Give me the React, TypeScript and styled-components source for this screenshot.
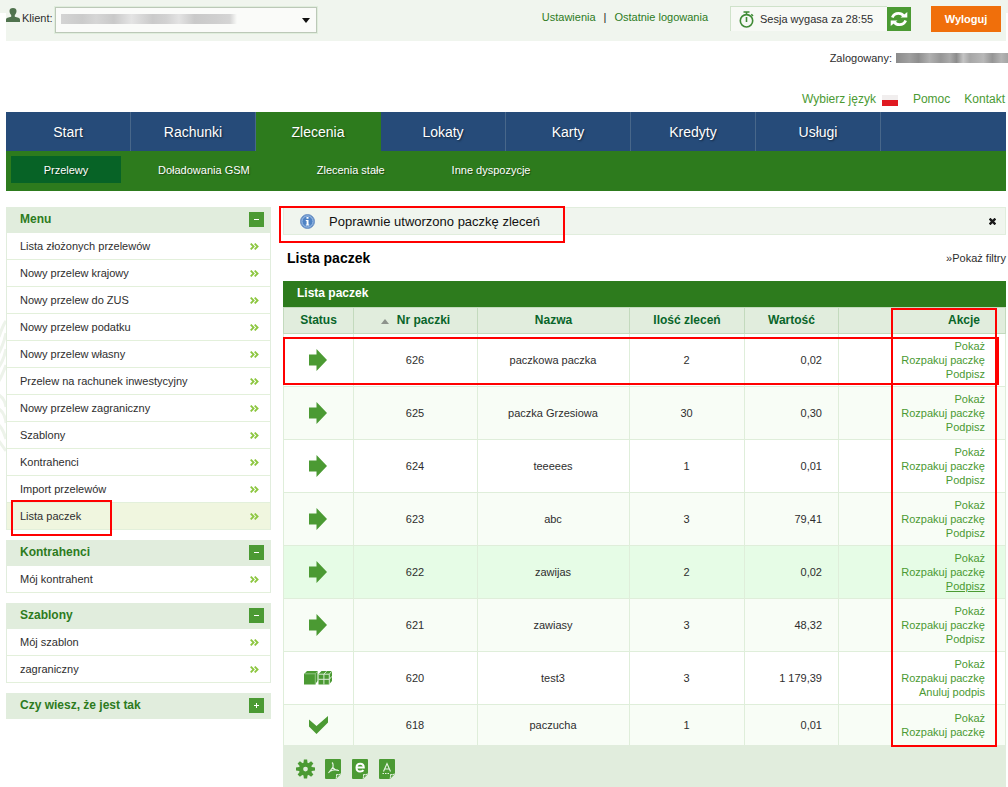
import React from "react";
import styled, { createGlobalStyle, css } from "styled-components";

const Global = createGlobalStyle`
  * { box-sizing: border-box; }
  body {
    margin: 0;
    background: #fff linear-gradient(#f0f5ee, #f0f5ee) 0 0 / 100% 13px no-repeat;
    font: 11px/14px "Liberation Sans", Arial, sans-serif;
    color: #2e2e2e;
  }
  a { color: inherit; text-decoration: none; }
  a:hover { text-decoration: underline; }
  button { font: inherit; border: 0; padding: 0; cursor: pointer; }
  ul { list-style: none; margin: 0; padding: 0; }
  h1, h2 { margin: 0; }
`;

const green = "#2d7b1d";
const leaf = "#4b9a33";
const pale = "#e1eddd";
const line = "#dfeeda";

const Page = styled.div`
  position: relative;
  padding: 0 2px 0 6px;
`;

const Leaves = styled.svg`
  position: absolute;
  left: 0;
  top: 315px;
`;

const TopBar = styled.header`
  display: flex;
  justify-content: space-between;
  align-items: flex-start;
  height: 41px;
  padding: 6px 5px 0 0;
  background: #f0f5ee;
`;

const Client = styled.div`
  display: flex;
  align-items: flex-start;
  label { padding: 5px 2px 0; }
`;

const PersonBox = styled.span`
  padding-top: 2px;
  line-height: 0;
`;

const SelectWrap = styled.div`
  position: relative;
  width: 262px;
  height: 26px;
  margin-top: 1px;
  svg { position: absolute; right: 7px; top: 11px; pointer-events: none; }
`;

const ClientSelect = styled.select`
  width: 100%;
  height: 100%;
  appearance: none;
  border: 1px solid #bcc8b8;
  border-radius: 0;
  background: #fafbf9;
  font: inherit;
  outline: 1px solid #e0eedd;
  outline-offset: 0;
`;

const Mask = styled.span<{ $dark?: boolean }>`
  display: block;
  height: 10px;
  ${(p) =>
    p.$dark
      ? css`
          width: 112px;
          background: linear-gradient(90deg, #8b8b8b, #a0a0a0 12%, #8e8e8e 20%, #b0b0b0 30%, #969696 40%, #aaa 48%, #8c8c8c 54%, #c4c4c4 60%, #a6a6a6 66%, #b8b8b8 78%, #959595 86%, #b4b4b4 94%, #a4a4a4);
        `
      : css`
          position: absolute;
          left: 6px;
          top: 7px;
          width: 176px;
          pointer-events: none;
          background: linear-gradient(90deg, #d4d4d4, #cbcbcb 12%, #d6d6d6 20%, #c9c9c9 30%, #e4e4e4 40%, #cacaca 52%, #d2d2d2 60%, #e3e3e3 67%, #c9c9c9 76%, #cfcfcf 88%, #d5d5d5 96%, #fafbf9);
        `}
`;

const Tools = styled.div`
  display: flex;
  align-items: flex-start;
`;

const QuickLinks = styled.nav`
  display: flex;
  gap: 8px;
  margin-right: 22px;
  padding-top: 4px;
  color: ${green};
  span { color: #222; }
`;

const Session = styled.div`
  display: flex;
  align-items: center;
  gap: 6px;
  width: 157px;
  height: 25px;
  padding-left: 8px;
  border: 1px solid #cfe2ca;
  border-width: 1px 0 0 1px;
  background: #f7f9f5;
`;

const Refresh = styled.button`
  display: grid;
  place-items: center;
  width: 24px;
  height: 24px;
  margin: 1px 20px 0 0;
  background: ${leaf};
`;

const Logout = styled.button`
  width: 70px;
  height: 26px;
  background: #f06f0b;
  color: #fff;
  font-weight: bold;
`;

const UserLine = styled.div`
  display: flex;
  justify-content: flex-end;
  align-items: center;
  gap: 4px;
  margin-right: -2px;
  padding-top: 10px;
`;

const LangLine = styled.nav`
  display: flex;
  justify-content: flex-end;
  align-items: center;
  padding: 27px 1px 5px 0;
  font-size: 12px;
  line-height: 15px;
  color: ${leaf};
  svg { margin: 2px 15px 0 6px; }
  a + a { margin-left: 14px; }
`;

const MainNav = styled.nav`
  display: grid;
  grid-template-columns: repeat(8, 1fr);
  height: 39px;
  background: #264b79;
`;

const Tab = styled.a<{ $on?: boolean }>`
  display: grid;
  place-items: center;
  border-right: 1px solid ${(p) => (p.$on ? green : "#48678a")};
  background: ${(p) => (p.$on ? green : "transparent")};
  color: #fff;
  font-size: 14px;
  text-shadow: 1px 1px 2px #0008;
`;

const SubNav = styled.nav`
  display: flex;
  gap: 7px;
  height: 40px;
  padding: 5px;
  background: ${green};
`;

const SubTab = styled.a<{ $on?: boolean }>`
  height: 27px;
  min-width: 110px;
  padding: 0 30px;
  line-height: 28px;
  text-align: center;
  color: #fff;
  background: ${(p) => (p.$on ? "#076326" : "transparent")};
  text-shadow: 1px 1px 1px #0006;
`;

const Body = styled.div`
  display: flex;
  align-items: flex-start;
  gap: 12px;
  padding-top: 16px;
`;

const Side = styled.aside`
  flex: 0 0 265px;
  display: flex;
  flex-direction: column;
  gap: 10px;
`;

const PanelHead = styled.div`
  display: flex;
  justify-content: space-between;
  height: 26px;
  padding: 5px 7px 0 14px;
  background: ${pale};
  h2 { font-size: 12px; line-height: 14px; color: ${green}; }
`;

const Toggle = styled.button`
  display: grid;
  place-items: center;
  width: 15px;
  height: 15px;
  background: ${leaf};
`;

const PanelList = styled.ul`
  border: 1px solid ${pale};
  border-width: 0 1px;
`;

const PanelItem = styled.li<{ $on?: boolean }>`
  position: relative;
  border-bottom: 1px solid #e3f0db;
  background: ${(p) => (p.$on ? "#f0f6df" : "#fff")};
  > a {
    display: flex;
    justify-content: space-between;
    align-items: center;
    height: 26px;
    padding: 0 11px 0 13px;
  }
`;

const Content = styled.main`
  position: relative;
  flex: 1;
  min-width: 0;
`;

const Mark = styled.span`
  position: absolute;
  z-index: 2;
  border: 2px solid #f00;
  pointer-events: none;
`;
const NoticeMark = styled(Mark)`left: -5px; top: -2px; width: 286px; height: 37px;`;
const ItemMark = styled(Mark)`left: 4px; top: -3px; width: 101px; height: 36px;`;
const RowMark = styled(Mark)`left: 0; right: 7px; top: 56px; height: 48px;`;
const ColumnMark = styled(Mark)`right: 9px; top: 27px; bottom: 40px; width: 106px;`;

const Notice = styled.div`
  position: relative;
  display: flex;
  align-items: center;
  height: 28px;
  padding: 0 8px 0 16px;
  border: 1px solid ${pale};
  background: #f0f5ee;
  font-size: 13px;
  color: #111;
  p { flex: 1; margin: 2px 0 0 14px; }
`;

const Close = styled.button`
  display: grid;
  place-items: center;
  width: 9px;
  height: 14px;
  background: none;
`;

const TitleRow = styled.div`
  display: flex;
  justify-content: space-between;
  align-items: center;
  height: 46px;
  padding-left: 4px;
  h1 { font-size: 14px; color: #000; }
`;

const TableBox = styled.section`
  position: relative;
`;

const TableTitle = styled.h2`
  height: 26px;
  padding-left: 14px;
  background: ${green};
  color: #fff;
  font-size: 12px;
  line-height: 24px;
`;

const Table = styled.table`
  width: 100%;
  table-layout: fixed;
  border-collapse: separate;
  border-spacing: 0;
`;

const Th = styled.th<{ $right?: boolean; $plain?: boolean }>`
  height: 27px;
  padding: ${(p) => (p.$right ? "0 25px 2px 0" : "0 0 2px")};
  border: solid #c3dabd;
  border-width: ${(p) => (p.$plain ? "1px 1px 1px 0" : "1px 0 1px 1px")};
  background: ${pale};
  color: #09652a;
  font-size: 12px;
  text-align: ${(p) => (p.$right ? "right" : "center")};
  svg { margin-right: 8px; }
`;

const Tr = styled.tr<{ $tone: "plain" | "alt" | "hover" }>`
  background: ${(p) => ({ plain: "#fff", alt: "#f8fdf6", hover: "#e6fce6" })[p.$tone]};
  &:last-child td { height: 40px; border-bottom: 0; }
`;

const Td = styled.td<{ $kind?: "value" | "actions" }>`
  height: 53px;
  padding: 0 1px 0 0;
  border: solid ${line};
  border-width: 0 0 1px 1px;
  text-align: center;
  svg { display: block; margin: 0 auto; }
  ${(p) => p.$kind === "value" && css`padding-right: 16px; text-align: right;`}
  ${(p) =>
    p.$kind === "actions" &&
    css`
      padding-right: 20px;
      border-width: 0 1px 1px 0;
      text-align: right;
      color: ${leaf};
    `}
`;

const Action = styled.a<{ $under?: boolean }>`
  display: block;
  text-decoration: ${(p) => (p.$under ? "underline" : "none")};
`;

const TableFoot = styled.footer`
  display: flex;
  align-items: center;
  gap: 10px;
  height: 42px;
  padding: 6px 13px 0;
  background: ${pale};
  button { height: 20px; background: none; }
  svg { display: block; }
`;

const Chevrons = () => (
  <svg width="9" height="7" viewBox="0 0 9 7" fill="none" stroke="#8cc63f" strokeWidth="1.800">
    <path d="M.7.6 3.600 3.500.7 6.400M4.700.6 7.600 3.500 4.700 6.400" />
  </svg>
);

const Arrow = () => (
  <svg width="18" height="22" viewBox="0 0 18 22" fill={leaf}>
    <path d="M0 5.5h7.5V0L18 11 7.500 22v-5.500H0z" />
  </svg>
);

const Boxes = () => (
  <svg width="28" height="14" viewBox="0 0 28 14">
    <path d="M0 3 3 0h10.500v10L11 13.500H0zM14.500 3l3-3H28v10l-3 3.500H14.500z" fill={leaf} />
    <path d="M.5 2.800H11.300v10.700M11.300 2.800l2-2.300" fill="none" stroke="#8fc282" />
    <path d="M14.500 3.200H25.300v10.300M25.300 3.200l2.500-3M14.500 8.300h10.800l2.700-3M19.900 13.500V3.200L22.500.3" fill="none" stroke="#d9ecd4" />
  </svg>
);

const Check = () => (
  <svg width="19" height="18" viewBox="0 0 19 18" fill={leaf}>
    <path d="M0 3.500 7.500 10 19 0v6.500L7.500 18 0 10.500z" />
  </svg>
);

const status = { sent: <Arrow />, packed: <Boxes />, done: <Check /> };

const Gear = () => (
  <svg width="19" height="20" viewBox="-10 -10 20 20" fill={leaf}>
    {[0, 45, 90, 135, 180, 225, 270, 315].map((a) => (
      <path key={a} d="M-2.300-5-1.700-10h3.400L2.300-5z" transform={`rotate(${a})`} />
    ))}
    <circle r="4.700" fill="none" stroke={leaf} strokeWidth="4.400" />
  </svg>
);

const Sheet = ({ children }: { children: React.ReactNode }) => (
  <svg width="17" height="20" viewBox="0 0 17 20">
    <path d="M1 0h14q1 0 1 1v14L11 20H1q-1 0-1-1V1q0-1 1-1z" fill={leaf} />
    <path d="M11 19.500q1-1.500.5-4 2 .8 4.300-.6" fill="none" stroke="#e9f4e6" />
    {children}
  </svg>
);

const Person = () => (
  <svg width="14" height="14" viewBox="0 0 14 15" preserveAspectRatio="none" fill="#50734e">
    <path d="M7 0C9.300 0 10.500 1.300 10.500 3.300c0 1.900-.8 3.300-1.700 4.200v2c2.500.8 5.200 1.200 5.200 3V15H0v-2.500c0-1.800 2.700-2.200 5.200-3v-2C4.300 6.600 3.500 5.200 3.500 3.300 3.500 1.300 4.700 0 7 0z" />
  </svg>
);

const menus = [
  {
    title: "Menu",
    open: true,
    items: [
      "Lista złożonych przelewów",
      "Nowy przelew krajowy",
      "Nowy przelew do ZUS",
      "Nowy przelew podatku",
      "Nowy przelew własny",
      "Przelew na rachunek inwestycyjny",
      "Nowy przelew zagraniczny",
      "Szablony",
      "Kontrahenci",
      "Import przelewów",
      "Lista paczek",
    ],
  },
  { title: "Kontrahenci", open: true, items: ["Mój kontrahent"] },
  { title: "Szablony", open: true, items: ["Mój szablon", "zagraniczny"] },
  { title: "Czy wiesz, że jest tak", open: false, items: [] },
];

type Batch = { state: keyof typeof status; no: string; name: string; count: string; value: string; last?: string; hover?: boolean };
const batches: Batch[] = [
  { state: "sent", no: "626", name: "paczkowa paczka", count: "2", value: "0,02", last: "Podpisz" },
  { state: "sent", no: "625", name: "paczka Grzesiowa", count: "30", value: "0,30", last: "Podpisz" },
  { state: "sent", no: "624", name: "teeeees", count: "1", value: "0,01", last: "Podpisz" },
  { state: "sent", no: "623", name: "abc", count: "3", value: "79,41", last: "Podpisz" },
  { state: "sent", no: "622", name: "zawijas", count: "2", value: "0,02", last: "Podpisz", hover: true },
  { state: "sent", no: "621", name: "zawiasy", count: "3", value: "48,32", last: "Podpisz" },
  { state: "packed", no: "620", name: "test3", count: "3", value: "1 179,39", last: "Anuluj podpis" },
  { state: "done", no: "618", name: "paczucha", count: "1", value: "0,01" },
];

export default function App() {
  return (
    <Page>
      <Global />
      <Leaves width="6" height="140" viewBox="0 0 6 140" fill="none" stroke="#edf3ea" strokeWidth="3" aria-hidden="true">
        <path d="M6 6Q3 10-1 22M6 18Q4 28-1 38M6 34Q4 44-1 52M6 50Q3 58-1 66M-1 80Q5 84 6 92M-1 94Q5 98 6 108M-1 110Q3 114 6 124M-1 126l7 10" />
      </Leaves>
      <TopBar>
        <Client>
          <PersonBox><Person /></PersonBox>
          <label htmlFor="client">Klient:</label>
          <SelectWrap>
            <ClientSelect id="client" defaultValue="">
              <option value=""></option>
            </ClientSelect>
            <Mask />
            <svg width="8" height="5" viewBox="0 0 8 5"><path d="M0 0h8L4 5z" fill="#111" /></svg>
          </SelectWrap>
        </Client>
        <Tools>
          <QuickLinks>
            <a href="#settings">Ustawienia</a>
            <span>|</span>
            <a href="#logins">Ostatnie logowania</a>
          </QuickLinks>
          <Session>
            <svg width="15" height="17" viewBox="0 0 15 17" fill="none" stroke="#3f8a35" strokeWidth="1.600">
              <circle cx="7.500" cy="9.800" r="6.200" />
              <path d="M4.500 1h6M7.500 1v3M7.500 6v5M12.300 3.300l1.700 1.700" />
            </svg>
            Sesja wygasa za 28:55
          </Session>
          <Refresh aria-label="Odśwież">
            <svg width="18" height="16" viewBox="0 0 18 16" fill="none" stroke="#fff" strokeWidth="2.800">
              <path d="M2.300 6.500Q4 2.300 8.500 2.300q3.500 0 5 2.500M15.700 9.500q-1.700 4.200-6.200 4.200-3.500 0-5-2.500" />
              <path d="M10.500 6.500h6.800V1zM7.500 9.500H.7V15z" fill="#fff" stroke="none" />
            </svg>
          </Refresh>
          <Logout>Wyloguj</Logout>
        </Tools>
      </TopBar>
      <UserLine>Zalogowany: <Mask $dark /></UserLine>
      <LangLine>
        <a href="#lang">Wybierz język</a>
        <svg width="16" height="11" viewBox="0 0 16 11">
          <path d="M0 0h16v11H0z" fill="#f1eeee" />
          <path d="M0 5h16v6H0z" fill="#e01a22" />
        </svg>
        <a href="#help">Pomoc</a>
        <a href="#contact">Kontakt</a>
      </LangLine>
      <MainNav>
        {["Start", "Rachunki", "Zlecenia", "Lokaty", "Karty", "Kredyty", "Usługi"].map((t) => (
          <Tab key={t} href="#tab" $on={t === "Zlecenia"}>{t}</Tab>
        ))}
      </MainNav>
      <SubNav>
        {["Przelewy", "Doładowania GSM", "Zlecenia stałe", "Inne dyspozycje"].map((t) => (
          <SubTab key={t} href="#sub" $on={t === "Przelewy"}>{t}</SubTab>
        ))}
      </SubNav>
      <Body>
        <Side>
          {menus.map((m) => (
            <section key={m.title}>
              <PanelHead>
                <h2>{m.title}</h2>
                <Toggle aria-label={m.title} aria-expanded={m.open}>
                  <svg width="5" height="5" viewBox="0 0 5 5" fill="#fff">
                    <path d={m.open ? "M0 2h5v1H0z" : "M0 2h2V0h1v2h2v1H3v2H2V3H0z"} />
                  </svg>
                </Toggle>
              </PanelHead>
              {m.open && (
                <PanelList>
                  {m.items.map((i) => (
                    <PanelItem key={i} $on={i === "Lista paczek"}>
                      <a href="#item">{i}<Chevrons /></a>
                      {i === "Lista paczek" && <ItemMark />}
                    </PanelItem>
                  ))}
                </PanelList>
              )}
            </section>
          ))}
        </Side>
        <Content>
          <Notice>
            <svg width="15" height="15" viewBox="0 0 15 15">
              <circle cx="7.500" cy="7.500" r="7" fill="#4f83c4" stroke="#7395c4" />
              <circle cx="7.500" cy="7.500" r="5.600" fill="none" stroke="#a9c6ea" />
              <path d="M6.500 3h2v1.800h-2zM5.800 6h2.700v4.500h.8v1H5.800v-1h.8V7h-.8z" fill="#fff" />
            </svg>
            <p>Poprawnie utworzono paczkę zleceń</p>
            <Close aria-label="Zamknij">
              <svg width="7" height="7" viewBox="0 0 7 7" stroke="#1a1a1a" strokeWidth="2.400"><path d="m.6.6 5.800 5.800M6.400.6.6 6.400" /></svg>
            </Close>
            <NoticeMark />
          </Notice>
          <TitleRow>
            <h1>Lista paczek</h1>
            <a href="#filters">»Pokaż filtry</a>
          </TitleRow>
          <TableBox>
            <TableTitle>Lista paczek</TableTitle>
            <Table>
              <colgroup>
                <col width="70" /><col width="124" /><col width="152" /><col width="115" /><col width="94" /><col width="53" /><col />
              </colgroup>
              <thead>
                <tr>
                  <Th>Status</Th>
                  <Th>
                    <svg width="8" height="5" viewBox="0 0 8 5"><path d="M4 0 8 5H0z" fill="#8d938c" /></svg>
                    Nr paczki
                  </Th>
                  <Th>Nazwa</Th>
                  <Th>Ilość zleceń</Th>
                  <Th>Wartość</Th>
                  <Th />
                  <Th $right $plain>Akcje</Th>
                </tr>
              </thead>
              <tbody>
                {batches.map((b, n) => (
                  <Tr key={b.no} $tone={b.hover ? "hover" : n % 2 ? "alt" : "plain"}>
                    <Td>{status[b.state]}</Td>
                    <Td>{b.no}</Td>
                    <Td>{b.name}</Td>
                    <Td>{b.count}</Td>
                    <Td $kind="value">{b.value}</Td>
                    <Td />
                    <Td $kind="actions">
                      <Action href="#show">Pokaż</Action>
                      <Action href="#unpack">Rozpakuj paczkę</Action>
                      {b.last && <Action href="#sign" $under={b.hover}>{b.last}</Action>}
                    </Td>
                  </Tr>
                ))}
              </tbody>
            </Table>
            <TableFoot>
              <button aria-label="Ustawienia tabeli"><Gear /></button>
              <button aria-label="Eksport PDF">
                <Sheet><path d="M7 3.500q1.500 1 1 4.500L3.500 14M8 8.500q2 3.200 6 3M4.500 12.500q4-2.500 8.500-1.500" fill="none" stroke="#e9f4e6" strokeWidth="1.100" /></Sheet>
              </button>
              <button aria-label="Eksport HTML">
                <Sheet><path d="M4.500 8.500h7.300Q11.800 4.800 8.200 4.800 4.500 4.800 4.500 8.700t3.700 3.800q2.300 0 3.300-1.300" fill="none" stroke="#fff" strokeWidth="2" /></Sheet>
              </button>
              <button aria-label="Eksport tekstowy">
                <Sheet><path d="M4.500 12.500 8 4.500l3.500 8M5.800 10h4.500M3.500 14.500h1.500m1 0h1.500m1 0h1.500" fill="none" stroke="#e9f4e6" strokeWidth="1.100" /></Sheet>
              </button>
            </TableFoot>
            <RowMark />
            <ColumnMark />
          </TableBox>
        </Content>
      </Body>
    </Page>
  );
}
